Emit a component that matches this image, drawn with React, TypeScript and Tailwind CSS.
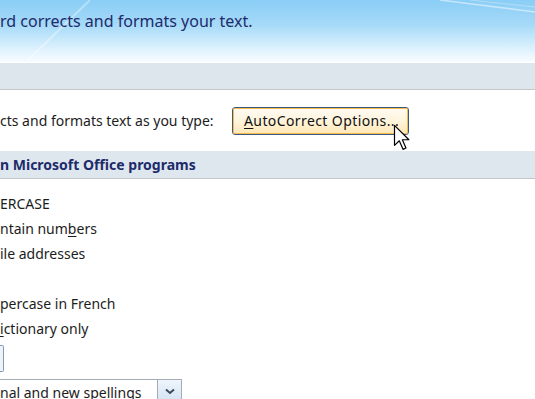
import React from "react";

function Cursor() {
  return (
    <svg width="19" height="28" viewBox="0 0 14 21" className="absolute left-[393px] top-[124px]">
      <path
        d="M1 1 L1 16 L4.6 12.6 L7.4 19 L9.6 18 L6.9 11.8 L11.8 11.8 Z"
        fill="#fff"
        stroke="#000"
        strokeWidth="0.9"
        strokeLinejoin="round"
      />
    </svg>
  );
}

export default function App() {
  return (
    <div className="relative w-[535px] h-[399px] overflow-hidden bg-white font-['Noto_Sans',sans-serif] text-[14px] text-[#1c1c1c]">
      {/* Dialog banner */}
      <div className="relative h-[63px] bg-[linear-gradient(to_bottom,#8acdf6_0%,#a6daf8_40%,#dcf1fd_78%,#f7fcff_100%)] border-b border-white">
        <svg className="absolute inset-0" width="535" height="63">
          <line x1="25" y1="63" x2="90" y2="0" stroke="#ffffff" strokeOpacity="0.35" strokeWidth="2" />
          <line x1="440" y1="0" x2="535" y2="12" stroke="#ffffff" strokeOpacity="0.5" strokeWidth="1.5" />
          <line x1="470" y1="0" x2="535" y2="7" stroke="#ffffff" strokeOpacity="0.3" strokeWidth="1" />
        </svg>
        <p className="relative pt-[9px] text-[16px] text-[#1d2b6b]">rd corrects and formats your text.</p>
      </div>

      <div className="h-[27px] bg-[#dde6ed] border-b border-[#c4c6c8]" />

      {/* AutoCorrect row */}
      <div className="flex items-center h-[61px]">
        <span className="w-[232px]">cts and formats text as you type:</span>
        <button className="h-[28px] w-[177px] rounded-[3px] border border-[#3d5a7e] p-0">
          <span className="flex h-full w-full items-center pl-[10px] rounded-[2px] border border-[#f5bb4c] bg-[linear-gradient(to_bottom,#fffbf2_0%,#fff4dc_50%,#ffe8b8_100%)] text-[14px] tracking-[0.4px] text-[#111]">
            <span className="underline underline-offset-2">A</span>utoCorrect Options...
          </span>
        </button>
      </div>

      {/* Section header */}
      <div className="h-[28px] flex items-center bg-[#dfe7ee] border-b border-[#c4c6c8] font-bold text-[#1d2b6b]">
        n Microsoft Office programs
      </div>

      {/* Options */}
      <div className="flex flex-col pt-[12px] leading-[25px]">
        <span>ERCASE</span>
        <span>
          ntain num<span className="underline underline-offset-2">b</span>ers
        </span>
        <span>ile addresses</span>
        <span>&nbsp;</span>
        <span>percase in French</span>
        <span>
          <span className="underline underline-offset-2">i</span>ctionary only
        </span>
      </div>

      <div className="mt-[4px] h-[27px] w-[4px] rounded-r-[2px] border border-l-0 border-[#7f9db9] bg-[#eef3f8]" />

      <div className="mt-[7px] flex h-[23px] w-[182px] items-stretch border-t border-r border-[#a5acb5]">
        <span className="flex-1 leading-[26px]">nal and new spellings</span>
        <span className="flex w-[24px] items-center justify-center border-l border-[#a5acb5] bg-[linear-gradient(to_bottom,#eef5fc,#d3e3f3)]">
          <svg width="10" height="7" viewBox="0 0 10 7">
            <path d="M1 1.5 L5 5 L9 1.5" fill="none" stroke="#3a4a5c" strokeWidth="2" />
          </svg>
        </span>
      </div>

      <Cursor />
    </div>
  );
}
